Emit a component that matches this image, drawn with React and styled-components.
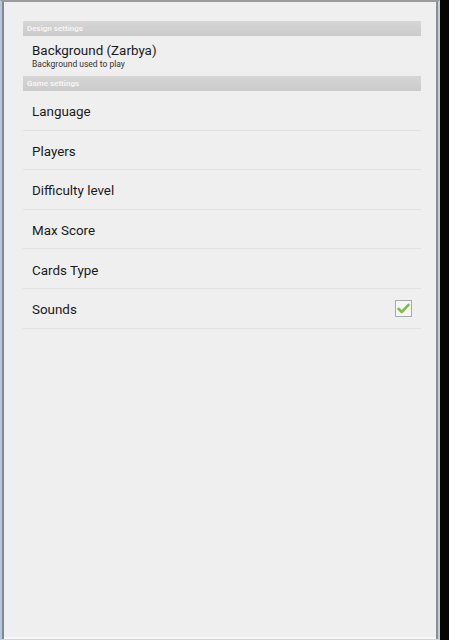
import styled, { createGlobalStyle } from "styled-components";

const GlobalStyle = createGlobalStyle`
  html, body {
    margin: 0;
    padding: 0;
    background: #000;
  }
  body {
    font-family: Roboto, "Liberation Sans", sans-serif;
  }
`;

const Screen = styled.div`
  display: flex;
  width: 449px;
  height: 640px;
  background: #050505;
`;

const Window = styled.div`
  width: 436px;
  height: 637px;
  background: #efefef;
  border-left: 2px solid #b9c6d4;
  border-right: 2px solid #c9cdd2;
  border-top: 2px solid #9a9a9a;
  border-bottom: 1px solid #d4d4d4;
  box-shadow: inset 2px 0 0 #7e8a98, inset -2px 0 0 #8a8f95, inset 0 -2px 0 #f8f8f8;
  display: flex;
  flex-direction: column;
`;

const Content = styled.div`
  padding: 19px 17px 0 21px;
  display: flex;
  flex-direction: column;
`;

const SectionHeader = styled.div`
  height: 15px;
  line-height: 15px;
  padding-left: 4px;
  background: linear-gradient(#d6d6d6, #cbcbcb);
  color: #f4f4f4;
  font-size: 8px;
  font-weight: bold;
`;

const Item = styled.div`
  display: flex;
  align-items: center;
  justify-content: space-between;
  padding: ${(p) => (p.$tall ? "0 9px" : "3px 9px 0 9px")};
  height: ${(p) => (p.$tall ? "40px" : "35.6px")};
  border-bottom: ${(p) => (p.$plain ? "none" : "1px solid #e2e2e2")};
  box-sizing: content-box;
`;

const TextCol = styled.div`
  display: flex;
  flex-direction: column;
`;

const Title = styled.div`
  font-size: 13.4px;
  color: #1a1a1a;
`;

const Summary = styled.div`
  font-size: 8.5px;
  color: #333;
  margin-top: 1px;
`;

const CheckBox = styled.div`
  width: 15px;
  height: 15px;
  margin-top: -3px;
  border: 1px solid #a9a9a9;
  background: #f6f6f6;
  display: flex;
  align-items: center;
  justify-content: center;
`;

const rows = ["Language", "Players", "Difficulty level", "Max Score", "Cards Type"];

export default function App() {
  return (
    <Screen>
      <GlobalStyle />
      <Window>
        <Content>
          <SectionHeader>Design settings</SectionHeader>
          <Item $tall $plain>
            <TextCol>
              <Title>Background (Zarbya)</Title>
              <Summary>Background used to play</Summary>
            </TextCol>
          </Item>
          <SectionHeader>Game settings</SectionHeader>
          {rows.map((r) => (
            <Item key={r}>
              <Title>{r}</Title>
            </Item>
          ))}
          <Item>
            <Title>Sounds</Title>
            <CheckBox>
              <svg width="13" height="11" viewBox="0 0 13 11">
                <path
                  d="M1.5 5.8 L4.8 9 L11.5 1.8"
                  fill="none"
                  stroke="#7cc242"
                  strokeWidth="2.6"
                  strokeLinecap="round"
                  strokeLinejoin="round"
                />
              </svg>
            </CheckBox>
          </Item>
        </Content>
      </Window>
    </Screen>
  );
}
